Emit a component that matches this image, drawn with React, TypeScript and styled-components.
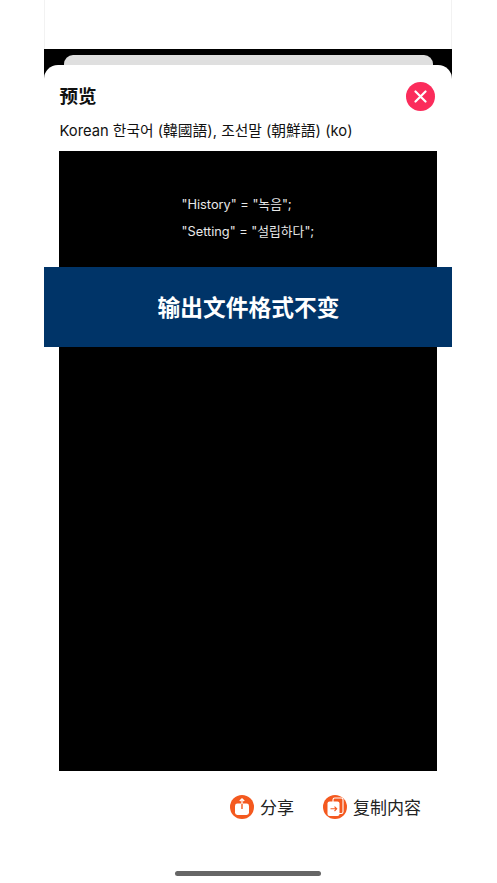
import React from 'react';
import styled, { createGlobalStyle } from 'styled-components';

const GlobalStyle = createGlobalStyle`
  html, body {
    margin: 0;
    padding: 0;
    background: #fff;
  }
  body {
    font-family: Inter, "Noto Sans CJK SC", "Noto Sans CJK KR", sans-serif;
  }
`;

const Page = styled.div`
  width: 497px;
  height: 883px;
  position: relative;
  overflow: hidden;
  background: #fff;
`;

const Frame = styled.div`
  width: 408px;
  height: 883px;
  margin-left: 44px;
  display: flex;
  flex-direction: column;
`;

const TopBar = styled.div`
  height: 49px;
  box-sizing: border-box;
  flex: none;
  border-left: 1px solid #f2f2f2;
  border-right: 1px solid #f2f2f2;
`;

const Backdrop = styled.div`
  flex: 1;
  display: flex;
  flex-direction: column;
  background: #000;
  padding-top: 6px;
  min-height: 0;
`;

const PeekCard = styled.div`
  height: 10px;
  flex: none;
  margin: 0 19px 0 19.5px;
  background: #dfdfdf;
  border-radius: 9px 9px 0 0;
`;

const Sheet = styled.div`
  flex: 1;
  position: relative;
  display: flex;
  flex-direction: column;
  box-sizing: border-box;
  padding: 17px 15px 0 15.5px;
  background: #fff;
  border-radius: 14px 14px 0 0;
`;

const Header = styled.div`
  display: flex;
  align-items: center;
  justify-content: space-between;
  height: 29px;
  padding-right: 2px;
`;

const Title = styled.h1`
  margin: -2px 0 0;
  font-size: 18.5px;
  line-height: 29px;
  font-weight: 700;
  color: #111;
  font-family: "Noto Sans CJK SC", sans-serif;
`;

const CloseButton = styled.button`
  width: 29px;
  height: 29px;
  padding: 0;
  border: 0;
  border-radius: 50%;
  background: #fb2c5b;
  display: flex;
  align-items: center;
  justify-content: center;
`;

const Subtitle = styled.div`
  margin-top: 10px;
  height: 20px;
  font-size: 14.75px;
  line-height: 20px;
  color: #111;
  white-space: nowrap;
`;

const Preview = styled.div`
  margin-top: 10px;
  margin-left: -0.5px;
  width: 378px;
  height: 620px;
  box-sizing: border-box;
  padding: 40px 0 0 122.5px;
  background: #000;
`;

const CodeLine = styled.div`
  font-size: 12.8px;
  line-height: 27px;
  color: #e8e8e8;
  white-space: nowrap;
`;

const Footer = styled.div`
  display: flex;
  justify-content: flex-end;
  align-items: center;
  gap: 29px;
  margin-top: 24px;
  height: 24px;
  padding-right: 16px;
`;

const Action = styled.div`
  display: flex;
  align-items: center;
  gap: 6px;
  font-size: 17px;
  line-height: 22px;
  color: #222;
  font-family: "Noto Sans CJK SC", sans-serif;
`;

const Banner = styled.div`
  position: absolute;
  top: 202px;
  left: 0;
  right: 0;
  height: 80px;
  padding: 0 0 2px 1px;
  box-sizing: border-box;
  display: flex;
  align-items: center;
  justify-content: center;
  background: #003468;
  color: #fff;
  font-size: 22.75px;
  font-weight: 700;
  font-family: "Noto Sans CJK SC", sans-serif;
`;

const HomeIndicator = styled.div`
  position: absolute;
  left: 131px;
  bottom: 7px;
  width: 146px;
  height: 5px;
  border-radius: 3px;
  background: #666;
`;

const ShareIcon = () => (
  <svg width="24" height="24" viewBox="0 0 24 24">
    <circle cx="12" cy="12" r="12" fill="#f4591f" />
    <rect x="5" y="8.5" width="14" height="11.5" rx="2.4" fill="#fff" />
    <path d="M12 8v6" stroke="#f4591f" strokeWidth="1.4" />
    <path d="M12 9V4M9.8 6 12 3.8 14.2 6" stroke="#fff" strokeWidth="1.3" fill="none" />
  </svg>
);

const CopyIcon = () => (
  <svg width="24" height="24" viewBox="0 0 24 24">
    <circle cx="12" cy="12" r="12" fill="#f4591f" />
    <rect x="10" y="3" width="10" height="15.5" rx="1.8" fill="none" stroke="#fff" strokeWidth="1.1" />
    <rect x="4.5" y="6.5" width="12" height="14.5" rx="2" fill="#fff" />
    <path d="M7.5 13.8h6M11.5 11.6l2.2 2.2-2.2 2.2" stroke="#f4591f" strokeWidth="1.1" fill="none" />
  </svg>
);

const App = () => (
  <Page>
    <GlobalStyle />
    <Frame>
      <TopBar />
      <Backdrop>
        <PeekCard />
        <Sheet>
          <Header>
            <Title>预览</Title>
            <CloseButton aria-label="关闭">
              <svg width="13" height="13" viewBox="0 0 13 13">
                <path d="M1.5 1.5l10 10M11.5 1.5l-10 10" stroke="#fff" strokeWidth="2.2" strokeLinecap="round" />
              </svg>
            </CloseButton>
          </Header>
          <Subtitle>Korean 한국어 (韓國語), 조선말 (朝鮮語) (ko)</Subtitle>
          <Preview>
            <CodeLine>"History" = "녹음";</CodeLine>
            <CodeLine>"Setting" = "설립하다";</CodeLine>
          </Preview>
          <Footer>
            <Action>
              <ShareIcon />
              分享
            </Action>
            <Action>
              <CopyIcon />
              复制内容
            </Action>
          </Footer>
          <Banner>输出文件格式不变</Banner>
          <HomeIndicator />
        </Sheet>
      </Backdrop>
    </Frame>
  </Page>
);

export default App;
